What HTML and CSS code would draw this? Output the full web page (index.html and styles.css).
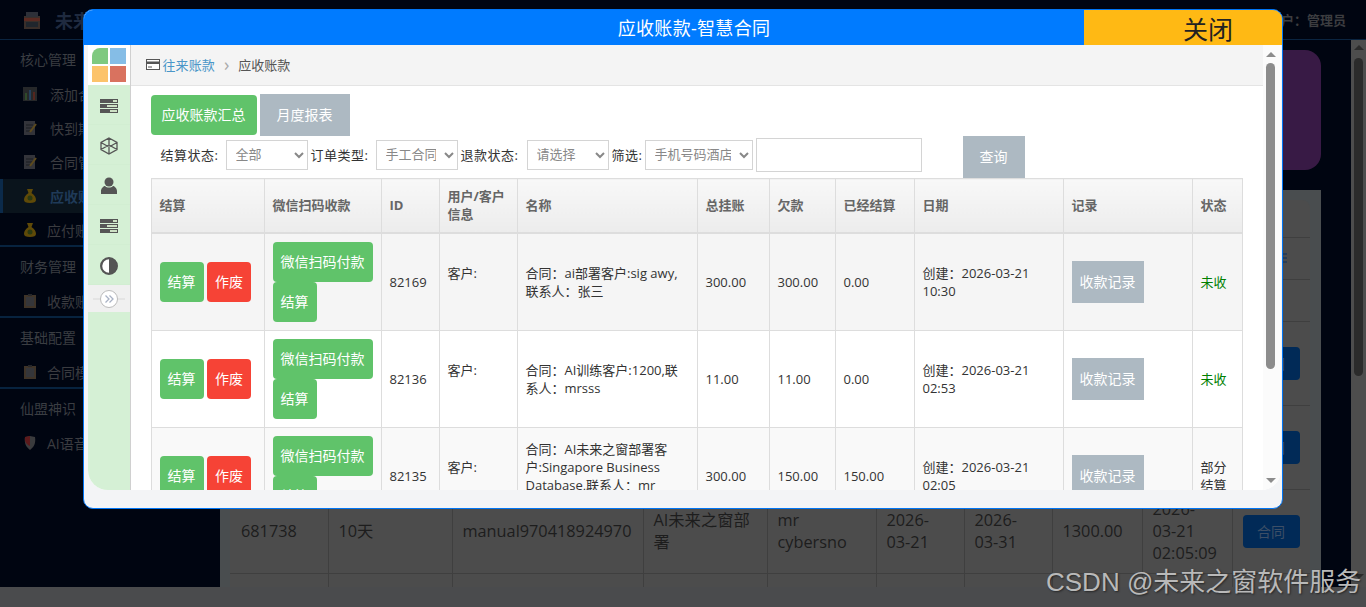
FILE: index.html
```html
<!DOCTYPE html>
<html lang="zh-CN">
<head>
<meta charset="utf-8">
<title>应收账款-智慧合同</title>
<link rel="stylesheet" href="styles.css">
</head>
<body>
<div class="page">
  <header class="topbar">
    <div class="brand">
      <svg class="brand-icon" viewBox="0 0 18 18"><rect x="1" y="5" width="16" height="13" fill="#3a2f2a"/><rect x="3" y="1" width="12" height="5" fill="#2d3038"/><rect x="1" y="7" width="16" height="3" fill="#5a2a22"/><rect x="3" y="11" width="12" height="5" fill="#20262d"/></svg>
      <span class="brand-name">未来之窗</span>
    </div>
    <div class="user">当前用户：管理员</div>
  </header>
  <div class="below">
    <aside class="side">
      <div class="side-group">
        <div class="side-title">核心管理</div>
        <div class="side-item"><svg class="side-icon" viewBox="0 0 14 14"><rect width="14" height="14" fill="#26282a"/><rect x="2" y="6" width="2" height="7" fill="#2f4a2a"/><rect x="6" y="3" width="2" height="10" fill="#24405c"/><rect x="10" y="5" width="2" height="8" fill="#54261f"/></svg><span>添加合同</span></div>
        <div class="side-item"><svg class="side-icon" viewBox="0 0 14 14"><rect x="1" y="0" width="11" height="14" fill="#33343a"/><path d="M3 4h7M3 7h7M3 10h4" stroke="#1b1c20"/><path d="M13 3 7 11" stroke="#5c4a1d" stroke-width="2"/></svg><span>快到期合同</span></div>
        <div class="side-item"><svg class="side-icon" viewBox="0 0 14 14"><rect x="1" y="0" width="11" height="14" fill="#33343a"/><path d="M3 4h7M3 7h7M3 10h4" stroke="#1b1c20"/><path d="M13 3 7 11" stroke="#5c4a1d" stroke-width="2"/></svg><span>合同管理</span></div>
        <div class="side-item side-active"><svg class="side-icon" viewBox="0 0 14 14"><path d="M4 0h6L8.500 4C12 6 13 9 13 11c0 2-2 3-6 3s-6-1-6-3c0-2 1-5 4.500-7z" fill="#5f4a08"/><circle cx="7" cy="9" r="2.500" fill="#2b3a12"/></svg><span>应收账款</span></div>
        <div class="side-item side-tight"><svg class="side-icon" viewBox="0 0 14 14"><path d="M4 0h6L8.500 4C12 6 13 9 13 11c0 2-2 3-6 3s-6-1-6-3c0-2 1-5 4.500-7z" fill="#5f4a08"/><circle cx="7" cy="9" r="2.500" fill="#2b3a12"/></svg><span>应付账款</span></div>
      </div>
      <div class="side-group">
        <div class="side-title">财务管理</div>
        <div class="side-item side-tight"><svg class="side-icon" viewBox="0 0 14 14"><rect x="1" y="1" width="12" height="13" fill="#3f3428"/><rect x="3" y="3" width="8" height="9" fill="#35363a"/><rect x="5" y="0" width="4" height="2" fill="#26272a"/></svg><span>收款账户</span></div>
      </div>
      <div class="side-group">
        <div class="side-title">基础配置</div>
        <div class="side-item side-tight"><svg class="side-icon" viewBox="0 0 14 14"><rect x="1" y="1" width="12" height="13" fill="#3f3428"/><rect x="3" y="3" width="8" height="9" fill="#35363a"/><rect x="5" y="0" width="4" height="2" fill="#26272a"/></svg><span>合同模板</span></div>
      </div>
      <div class="side-group">
        <div class="side-title">仙盟神识</div>
        <div class="side-item side-tight"><svg class="side-icon" viewBox="0 0 14 14"><path d="M2 1 7 0l5 1c1 6-1 10-5 13C3 11 1 7 2 1z" fill="#3a3b3d"/><path d="M7 0 2 1c-.5 4 .5 7 5 9z" fill="#5c1a1c"/></svg><span>AI语音</span></div>
      </div>
    </aside>
    <main class="main">
      <div class="banner"><div class="banner-card"></div></div>
      <section class="panel">
        <div class="card">
          <table class="bg-table">
            <colgroup><col class="bc1"><col class="bc2"><col class="bc3"><col class="bc4"><col class="bc5"><col class="bc6"><col class="bc7"><col class="bc8"><col class="bc9"><col class="bc10"></colgroup>
            <tr class="bh1"><td></td><td></td><td></td><td></td><td></td><td></td><td></td><td></td><td></td><td></td></tr>
            <tr class="bh2"><td></td><td></td><td></td><td></td><td></td><td></td><td></td><td></td><td></td><td class="bg-menu"><svg class="bg-menu-icon" viewBox="0 0 14 10"><path d="M0 1h14M0 5h14M0 9h14" stroke="#0a2f5c" stroke-width="1"/></svg></td></tr>
            <tr class="bh2"><td></td><td></td><td></td><td></td><td></td><td></td><td></td><td></td><td></td><td></td></tr>
            <tr class="bh3"><td></td><td></td><td></td><td></td><td></td><td></td><td></td><td></td><td></td><td><span class="bg-btn">合同</span></td></tr>
            <tr class="bh3"><td></td><td></td><td></td><td></td><td></td><td></td><td></td><td></td><td></td><td><span class="bg-btn">合同</span></td></tr>
            <tr class="bh3"><td>681738</td><td>10天</td><td>manual970418924970</td><td>AI未来之窗部署</td><td>mr cybersno</td><td>2026-<br>03-21</td><td>2026-<br>03-31</td><td>1300.00</td><td>2026-<br>03-21<br>02:05:09</td><td><span class="bg-btn">合同</span></td></tr>
            <tr class="bh3"><td></td><td></td><td></td><td></td><td></td><td></td><td></td><td></td><td></td><td></td></tr>
          </table>
        </div>
      </section>
    </main>
    <div class="gutter"></div>
  </div>
</div>

<div class="page-scroll">
  <span class="arrow-up arrow-dim"></span>
  <span class="page-thumb"></span>
  <span class="arrow-down arrow-dim page-arrow-down"></span>
</div>

<div class="modal">
  <div class="modal-head">
    <div class="modal-title">应收账款-智慧合同</div>
    <div class="modal-close">关闭</div>
  </div>
  <div class="frame">
    <nav class="nav">
      <div class="logo">
        <span class="sq sq-g"></span><span class="sq sq-b"></span><span class="sq sq-o"></span><span class="sq sq-r"></span>
      </div>
      <div class="nav-item"><svg class="nav-icon" viewBox="0 0 18 14"><rect width="18" height="4" fill="#555"/><rect y="5" width="18" height="4" fill="#555"/><rect y="10" width="18" height="4" fill="#555"/><rect x="13" y="1" width="4" height="2" fill="#cde0c4"/><rect x="7" y="6" width="10" height="2" fill="#cde0c4"/><rect x="10" y="11" width="7" height="2" fill="#cde0c4"/></svg></div>
      <div class="nav-item"><svg class="nav-icon nav-icon-tall" viewBox="0 0 18 18"><path d="M9 1 17 5.500v7L9 17 1 12.500v-7zM1 5.500 9 10l8-4.500M9 10v7M1 12.500 9 8l8 4.500M9 1v7" fill="none" stroke="#555" stroke-width="1.300"/></svg></div>
      <div class="nav-item"><svg class="nav-icon nav-icon-tall" viewBox="0 0 18 18"><circle cx="9" cy="5" r="4.500" fill="#555"/><path d="M1 17v-3c0-3 3-5 4-5 1 1 2.500 1.500 4 1.500s3-.5 4-1.500c1 0 4 2 4 5v3z" fill="#555"/></svg></div>
      <div class="nav-item"><svg class="nav-icon" viewBox="0 0 18 14"><rect width="18" height="4" fill="#555"/><rect y="5" width="18" height="4" fill="#555"/><rect y="10" width="18" height="4" fill="#555"/><rect x="13" y="1" width="4" height="2" fill="#cde0c4"/><rect x="7" y="6" width="10" height="2" fill="#cde0c4"/><rect x="10" y="11" width="7" height="2" fill="#cde0c4"/></svg></div>
      <div class="nav-item"><svg class="nav-icon nav-icon-tall" viewBox="0 0 16 16"><circle cx="8" cy="8" r="7" fill="#fff" stroke="#555" stroke-width="2"/><path d="M8 1a7 7 0 0 1 0 14z" fill="#555"/></svg></div>
      <div class="nav-toggle"><svg class="toggle-icon" viewBox="0 0 32 20"><path d="M0 10h32" stroke="#d8d8d8"/><circle cx="16" cy="10" r="8.500" fill="#fff" stroke="#bbb"/><path d="M12.500 6.500 16 10l-3.500 3.500M16.500 6.500 20 10l-3.500 3.500" fill="none" stroke="#a9b2c4" stroke-width="1.300"/></svg></div>
    </nav>
    <div class="content">
      <div class="crumbs">
        <svg class="crumb-icon" viewBox="0 0 14 11"><rect x=".5" y=".5" width="13" height="10" fill="#fff" stroke="#555"/><rect y="2.500" width="14" height="2.500" fill="#555"/><path d="M2 8h4" stroke="#555"/></svg>
        <a class="crumb-link">往来账款</a>
        <span class="crumb-sep">›</span>
        <span class="crumb-cur">应收账款</span>
      </div>
      <div class="tabs">
        <button class="btn btn-green tab-main">应收账款汇总</button>
        <button class="btn btn-gray tab-other">月度报表</button>
      </div>
      <form class="filters">
        <label class="flabel fl-first">结算状态:</label>
        <select class="fsel fs-82"><option>全部</option></select>
        <label class="flabel fl-68">订单类型:</label>
        <select class="fsel fs-82"><option>手工合同</option></select>
        <label class="flabel fl-69">退款状态:</label>
        <select class="fsel fs-82"><option>请选择</option></select>
        <label class="flabel fl-36">筛选:</label>
        <select class="fsel fs-108"><option>手机号码酒店</option></select>
        <input class="finput" type="text">
        <button type="button" class="btn btn-gray fbtn">查询</button>
      </form>
      <table class="grid">
        <colgroup><col class="c1"><col class="c2"><col class="c3"><col class="c4"><col class="c5"><col class="c6"><col class="c7"><col class="c8"><col class="c9"><col class="c10"><col class="c11"></colgroup>
        <thead>
          <tr><th>结算</th><th>微信扫码收款</th><th>ID</th><th>用户/客户信息</th><th>名称</th><th>总挂账</th><th>欠款</th><th>已经结算</th><th>日期</th><th>记录</th><th>状态</th></tr>
        </thead>
        <tbody>
          <tr class="row-a">
            <td><button class="btn btn-green small">结算</button> <button class="btn btn-red small">作废</button></td>
            <td><button class="btn btn-green stack">微信扫码付款</button><button class="btn btn-green stack small">结算</button></td>
            <td>82169</td><td>客户:<br>&nbsp;</td>
            <td>合同：ai部署客户:sig awy,联系人：张三</td>
            <td>300.00</td><td>300.00</td><td>0.00</td>
            <td>创建：2026-03-21 10:30</td>
            <td><button class="btn btn-gray rec">收款记录</button></td>
            <td class="st-green">未收</td>
          </tr>
          <tr class="row-b">
            <td><button class="btn btn-green small">结算</button> <button class="btn btn-red small">作废</button></td>
            <td><button class="btn btn-green stack">微信扫码付款</button><button class="btn btn-green stack small">结算</button></td>
            <td>82136</td><td>客户:<br>&nbsp;</td>
            <td>合同：AI训练客户:1200,联系人：mrsss</td>
            <td>11.00</td><td>11.00</td><td>0.00</td>
            <td>创建：2026-03-21 02:53</td>
            <td><button class="btn btn-gray rec">收款记录</button></td>
            <td class="st-green">未收</td>
          </tr>
          <tr class="row-c">
            <td><button class="btn btn-green small">结算</button> <button class="btn btn-red small">作废</button></td>
            <td><button class="btn btn-green stack">微信扫码付款</button><button class="btn btn-green stack small">结算</button></td>
            <td>82135</td><td>客户:<br>&nbsp;</td>
            <td>合同：AI未来之窗部署客户:Singapore Business Database,联系人：mr cybersno</td>
            <td>300.00</td><td>150.00</td><td>150.00</td>
            <td>创建：2026-03-21 02:05</td>
            <td><button class="btn btn-gray rec">收款记录</button></td>
            <td>部分结算</td>
          </tr>
        </tbody>
      </table>
    </div>
    <div class="frame-scroll">
      <span class="arrow-up"></span>
      <span class="frame-thumb"></span>
      <span class="arrow-down frame-arrow-down"></span>
    </div>
  </div>
</div>

<div class="watermark">CSDN @未来之窗软件服务</div>
</body>
</html>
```
FILE: styles.css
```css
* { box-sizing: border-box; }
html, body { margin: 0; height: 607px; overflow: hidden; }
body {
  position: relative;
  background: #4a4b4d;
  font-family: "Open Sans", "Noto Sans CJK SC", sans-serif;
  font-size: 13px;
  color: #333;
}

/* background page */
.page { height: 587px; display: flex; flex-direction: column; background: #000511; }
.topbar {
  height: 40px; flex: none;
  display: flex; justify-content: space-between; align-items: center;
  border-bottom: 1px solid #0a2440;
  padding: 0 20px 0 23px;
}
.brand { display: flex; align-items: center; gap: 14px; }
.brand-icon { width: 18px; height: 18px; }
.brand-name { font-size: 18px; font-weight: 700; color: #1f2a3f; }
.user { font-size: 13px; font-weight: 700; color: #3c3d40; }
.below { flex: 1; display: flex; min-height: 0; }
.side { width: 220px; flex: none; }
.side-group { border-bottom: 2px solid #07233f; padding-bottom: 0; }
.side-group:nth-child(1) { height: 207px; padding-top: 3px; }
.side-group:nth-child(2), .side-group:nth-child(3) { height: 71px; padding-top: 3px; }
.side-group:nth-child(4) { border-bottom: 0; padding-top: 3px; }
.side-title { height: 34px; line-height: 34px; padding-left: 20px; font-size: 14px; color: #3a3d42; }
.side-item {
  height: 34px; display: flex; align-items: center; gap: 13px;
  padding-left: 23px; font-size: 14px; color: #3b3c40; border-left: 0;
}
.side-tight { gap: 10px; }
.side-active { background: #0a141c; box-shadow: inset 3px 0 0 #0b2a4a; color: #1f3a58; font-weight: 700; }
.side-icon { width: 14px; height: 14px; flex: none; }

.main { width: 1101px; flex: none; display: flex; flex-direction: column; min-height: 0; }
.banner { height: 150px; flex: none; padding-top: 10px; display: flex; justify-content: flex-end; }
.banner-card { width: 300px; height: 120px; background: #381a45; border-radius: 16px; }
.panel { flex: 1; min-height: 0; background: #494d4f; padding: 10px 11px 0 10px; overflow: hidden; }
.card { background: #4c4c4c; border-radius: 8px 8px 0 0; height: 100%; overflow: hidden; }
.bg-table { width: 1080px; table-layout: fixed; border-collapse: collapse; font-size: 16.3px; line-height: 22px; color: #1d1d1d; }
.bg-table td { border-bottom: 1px solid #3f3f3f; border-left: 1px solid #3f3f3f; padding: 0 10px; vertical-align: middle; }
.bg-table td:first-child { border-left: 0; padding-left: 11px; }
.bc1 { width: 98px; } .bc2 { width: 124px; } .bc3 { width: 191px; } .bc4 { width: 124px; } .bc5 { width: 109px; }
.bc6 { width: 88px; } .bc7 { width: 88px; } .bc8 { width: 90px; } .bc9 { width: 90px; } .bc10 { width: 78px; }
.bh1 { height: 37px; } .bh2 { height: 42px; } .bh3 { height: 84px; }
.bg-btn {
  display: block; width: 57px; height: 33px; line-height: 33px; text-align: center;
  background: #012a57; border-radius: 4px; font-size: 14px; color: #3d4f66;
}
.bg-menu-icon { display: block; width: 14px; height: 10px; margin-left: 30px; }
.gutter { flex: 1; background: #000511; margin-right: 15px; }

.page-scroll { position: absolute; left: 1351px; top: 40px; width: 15px; height: 547px; background: #4d4d4d; }
.page-thumb { position: absolute; left: 3px; top: 18px; width: 9px; height: 318px; background: #2b2b2b; border-radius: 5px; }
.arrow-up, .arrow-down {
  position: absolute; left: 3px; width: 0; height: 0;
  border-left: 5px solid transparent; border-right: 5px solid transparent;
}
.arrow-up { top: 5px; border-bottom: 5px solid #8c8c8c; }
.arrow-down { border-top: 5px solid #8c8c8c; }
.arrow-dim.arrow-up { border-bottom-color: #2b2b2b; }
.arrow-dim.arrow-down { border-top-color: #2b2b2b; }
.page-arrow-down { top: 534px; }

/* modal */
.modal {
  position: absolute; left: 83px; top: 9px; width: 1200px; height: 500px;
  background: #f3f4f6; border: 1.5px solid #0075f5; border-radius: 10px; overflow: hidden;
}
.modal-head { height: 35px; display: flex; background: #007bff; }
.modal-title { flex: 1; padding-left: 220px; text-align: center; color: #fff; font-size: 18px; letter-spacing: .3px; line-height: 36px; }
.modal-close { width: 198px; flex: none; background: #ffb914; color: #222; font-size: 25px; line-height: 38px; padding-left: 99px; }
.frame {
  position: relative; display: flex; height: 445px; margin-left: 3.5px; width: 1193px;
  background: #fff; border-radius: 0 0 20px 20px; overflow: hidden;
}
.nav { width: 43px; flex: none; background: #d5f0d5; border-right: 1px solid #d0d0d0; }
.logo {
  height: 40px; background: #fff; padding: 3px 4px 0 4px;
  display: grid; grid-template-columns: 16px 16px; grid-auto-rows: 16px; gap: 2px; align-content: start;
}
.sq-g { background: #7fc97f; border-top-left-radius: 8px; }
.sq-b { background: #85bde6; }
.sq-o { background: #fcc36b; }
.sq-r { background: #d9725f; }
.nav-item { height: 40px; padding-top: 2px; display: flex; align-items: center; justify-content: center; border-bottom: 1px solid #d2eed2; }
.nav-icon { width: 18px; height: 14px; }
.nav-icon-tall { height: 18px; }
.nav-toggle { height: 27px; background: #f0f0f0; display: flex; align-items: center; justify-content: center; }
.toggle-icon { width: 32px; height: 20px; }

.content { width: 1132px; flex: none; overflow: hidden; }
.crumbs {
  height: 41px; display: flex; align-items: center;
  background: #f4f4f4; border-bottom: 1px solid #e4e4e4; padding: 0 0 2px 15px;
}
.crumb-icon { width: 14px; height: 11px; margin-right: 3px; }
.crumb-link { color: #4a96c8; letter-spacing: .1px; }
.crumb-sep { color: #aaa; margin: 0 9px; font-size: 18px; line-height: 16px; }
.crumb-cur { color: #555; }

.btn {
  border: 0; margin: 0; padding: 0 0 2px; color: #fff; font-family: inherit; font-size: 14px;
  text-align: center; cursor: pointer; vertical-align: middle;
}
.btn-green { background: #60c36a; border-radius: 4px; }
.btn-red { background: #f64336; border-radius: 4px; }
.btn-gray { background: #adb9c2; }
.tabs { display: flex; align-items: center; height: 42px; margin-top: 8px; padding-left: 20px; }
.tab-main { width: 106px; height: 40px; }
.tab-other { width: 90px; height: 42px; margin-left: 3px; }
.filters { display: flex; align-items: center; height: 42px; padding-left: 20px; }
.flabel { color: #333; white-space: nowrap; padding-left: 3px; margin-top: -5px; font-size: 13px; letter-spacing: .5px; }
.fl-first { padding-left: 10px; width: 75px; }
.fl-68 { width: 68px; }
.fl-69 { width: 69px; }
.fl-36 { width: 36px; }
.fsel {
  height: 30px; margin-top: -4px; border: 1px solid #d4d4d4; background: #fff; color: #888;
  font-family: inherit; font-size: 13px; padding: 0 5px 2px;
}
.fs-82 { width: 82px; }
.fs-108 { width: 108px; }
.finput { width: 166px; height: 34px; margin: -4px 0 0 3px; border: 1px solid #d4d4d4; background: #fff; }
.fbtn { width: 62px; height: 42px; margin-left: 41px; }

.grid { width: 1091px; margin-left: 20px; table-layout: fixed; border-collapse: collapse; line-height: 18px; }
.c1 { width: 113px; } .c2 { width: 117px; } .c3 { width: 58px; } .c4 { width: 78px; } .c5 { width: 180px; }
.c6 { width: 72px; } .c7 { width: 66px; } .c8 { width: 79px; } .c9 { width: 149px; } .c10 { width: 129px; } .c11 { width: 50px; }
.grid th, .grid td { border: 1px solid #ddd; padding: 8px; vertical-align: middle; text-align: left; }
.grid th {
  height: 54px; font-weight: 700; color: #666; padding: 8px;
  background: linear-gradient(#f8f8f8, #ececec); border-bottom-width: 2px;
}
.grid td { color: #333; }
.row-a td { background: #f5f5f5; }
.row-b td { background: #fff; }
.row-c td { background: #f9f9f9; }
.grid .small { width: 44px; height: 40px; }
.grid .stack { display: block; width: 100px; height: 40px; }
.grid .stack.small { width: 44px; }
.grid .rec { width: 72px; height: 42px; }
.st-green { color: #008000 !important; }

.frame-scroll { position: absolute; right: 0; top: 0; width: 18px; height: 100%; background: #fbfbfb; }
.frame-thumb { position: absolute; left: 3px; top: 18px; width: 9px; height: 306px; background: #8c8c8c; border-radius: 5px; }
.frame-scroll .arrow-up { left: 3px; top: 7px; }
.frame-arrow-down { left: 3px; top: 433px; }

.watermark {
  position: absolute; left: 1046px; top: 566px; white-space: nowrap;
  font-family: "Liberation Sans", "Noto Sans CJK SC", sans-serif; font-size: 26px; line-height: 32px;
  color: #b9b9b9; text-shadow: 1px 1px 2px rgba(0,0,0,.5);
}
```
